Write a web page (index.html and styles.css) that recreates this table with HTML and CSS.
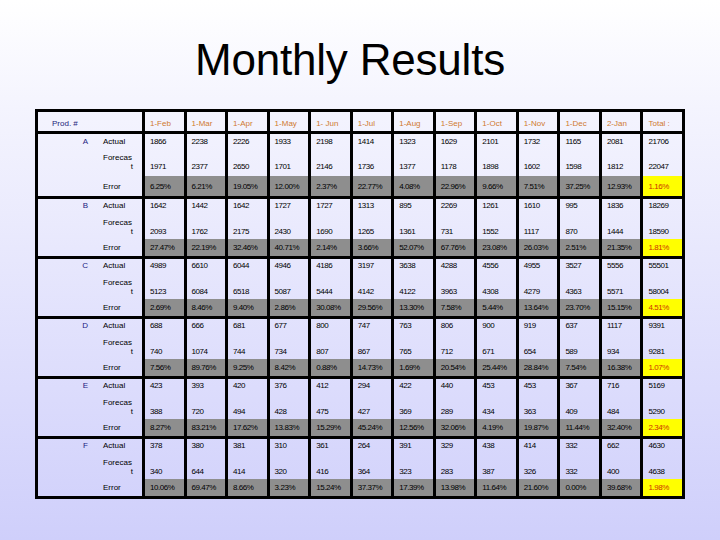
FILE: index.html
```html
<!DOCTYPE html>
<html>
<head>
<meta charset="utf-8">
<title>Monthly Results</title>
<link rel="stylesheet" href="styles.css">
</head>
<body>
<h1 class="title">Monthly Results</h1>
<div class="sheet">
  <div class="row head">
    <div class="c prodh">Prod. #</div>
    <div class="c d">1-Feb</div><div class="c d">1-Mar</div><div class="c d">1-Apr</div><div class="c d">1-May</div><div class="c d">1- Jun</div><div class="c d">1-Jul</div><div class="c d">1-Aug</div><div class="c d">1-Sep</div><div class="c d">1-Oct</div><div class="c d">1-Nov</div><div class="c d">1-Dec</div><div class="c d">2-Jan</div><div class="c d">Total :</div>
  </div>
  <div id="groups"></div>
</div>
<script src="app.js"></script>
</body>
</html>
```
FILE: app.js
```js
var data = [
  ["A",
   ["1866","2238","2226","1933","2198","1414","1323","1629","2101","1732","1165","2081","21706"],
   ["1971","2377","2650","1701","2146","1736","1377","1178","1898","1602","1598","1812","22047"],
   ["6.25%","6.21%","19.05%","12.00%","2.37%","22.77%","4.08%","22.96%","9.66%","7.51%","37.25%","12.93%","1.16%"]],
  ["B",
   ["1642","1442","1642","1727","1727","1313","895","2269","1261","1610","995","1836","18269"],
   ["2093","1762","2175","2430","1690","1265","1361","731","1552","1117","870","1444","18590"],
   ["27.47%","22.19%","32.46%","40.71%","2.14%","3.66%","52.07%","67.76%","23.08%","26.03%","2.51%","21.35%","1.81%"]],
  ["C",
   ["4989","6610","6044","4946","4186","3197","3638","4288","4556","4955","3527","5556","55501"],
   ["5123","6084","6518","5087","5444","4142","4122","3963","4308","4279","4363","5571","58004"],
   ["2.69%","8.46%","9.40%","2.86%","30.08%","29.56%","13.30%","7.58%","5.44%","13.64%","23.70%","15.15%","4.51%"]],
  ["D",
   ["688","666","681","677","800","747","763","806","900","919","637","1117","9391"],
   ["740","1074","744","734","807","867","765","712","671","654","589","934","9281"],
   ["7.56%","89.76%","9.25%","8.42%","0.88%","14.73%","1.69%","20.54%","25.44%","28.84%","7.54%","16.38%","1.07%"]],
  ["E",
   ["423","393","420","376","412","294","422","440","453","453","367","716","5169"],
   ["388","720","494","428","475","427","369","289","434","363","409","484","5290"],
   ["8.27%","83.21%","17.62%","13.83%","15.29%","45.24%","12.56%","32.06%","4.19%","19.87%","11.44%","32.40%","2.34%"]],
  ["F",
   ["378","380","381","310","361","264","391","329","438","414","332","662","4630"],
   ["340","644","414","320","416","364","323","283","387","326","332","400","4638"],
   ["10.06%","69.47%","8.66%","3.23%","15.24%","37.37%","17.39%","13.98%","11.64%","21.60%","0.00%","39.68%","1.98%"]]
];

function cells(vals, cls) {
  return vals.map(function (v, i) {
    var extra = (i === vals.length - 1) ? " total" : "";
    return '<div class="c d num ' + cls + extra + '">' + v + '</div>';
  }).join("");
}

var html = data.map(function (g, gi) {
  return '<div class="group' + (gi === 0 ? ' first' : '') + '">' +
    '<div class="row actual"><div class="c prod">' + g[0] + '</div><div class="c lab">Actual</div>' + cells(g[1], "") + '</div>' +
    '<div class="row forecast"><div class="c prod"></div><div class="c lab"><span class="l1">Forecas</span><span class="l2">t</span></div>' + cells(g[2], "fc") + '</div>' +
    '<div class="row error"><div class="c prod"></div><div class="c lab">Error</div>' + cells(g[3], "err") + '</div>' +
    '</div>';
}).join("");
document.getElementById("groups").innerHTML = html;
```
FILE: styles.css
```css
html, body {
  margin: 0;
  padding: 0;
}
body {
  width: 720px;
  height: 540px;
  overflow: hidden;
  background: linear-gradient(to bottom, #ffffff 0%, #f4f4fe 20%, #cfcffb 100%);
  font-family: "Liberation Sans", Arial, sans-serif;
  color: #000;
}
.title {
  margin: 35px 0 0 0;
  padding-right: 20px;
  font-weight: normal;
  font-size: 44px;
  line-height: 50px;
  text-align: center;
  letter-spacing: -0.2px;
}
.sheet {
  margin: 24px 0 0 35px;
  width: 650px;
  box-sizing: border-box;
  border: 3px solid #000;
  font-size: 8px;
  line-height: 9px;
}
.row {
  display: grid;
  grid-template-columns: 57px 47px repeat(13, 1fr);
}
.c {
  box-sizing: border-box;
  min-width: 0;
  white-space: nowrap;
  overflow: hidden;
}
.d {
  border-left: 3px solid #000;
  padding-left: 5px;
}
.num {
  letter-spacing: -0.45px;
}
.head {
  height: 19px;
}
.head .c {
  padding-top: 7px;
  color: #d07a30;
}
.head .prodh {
  grid-column: 1 / span 2;
  color: #1c1c7a;
  padding-left: 14px;
}
.group {
  border-top: 3px solid #000;
}
.prod {
  text-align: right;
  padding-right: 7px;
  color: #1c1c80;
}
.lab {
  padding-left: 8px;
  padding-right: 9px;
}
.lab .l1, .lab .l2 {
  display: block;
}
.lab .l2 {
  text-align: right;
}
.actual {
  height: 16px;
}
.actual .c {
  padding-top: 2px;
}
.forecast {
  height: 24px;
}
.forecast .lab {
  padding-top: 3px;
}
.forecast .d {
  padding-top: 12px;
}
.error {
  height: 17px;
}
.error .c {
  padding-top: 4px;
}
.error .d {
  background: #8e8e8e;
}
.error .d.total {
  background: #ffff00;
  color: #cc3300;
}
.first .actual {
  height: 17px;
}
.first .actual .c {
  padding-top: 3px;
}
.first .forecast {
  height: 25px;
}
.first .forecast .lab {
  padding-top: 2px;
}
.first .forecast .d {
  padding-top: 11px;
}
.first .error {
  height: 20px;
}
.first .error .c {
  padding-top: 6px;
}
```
